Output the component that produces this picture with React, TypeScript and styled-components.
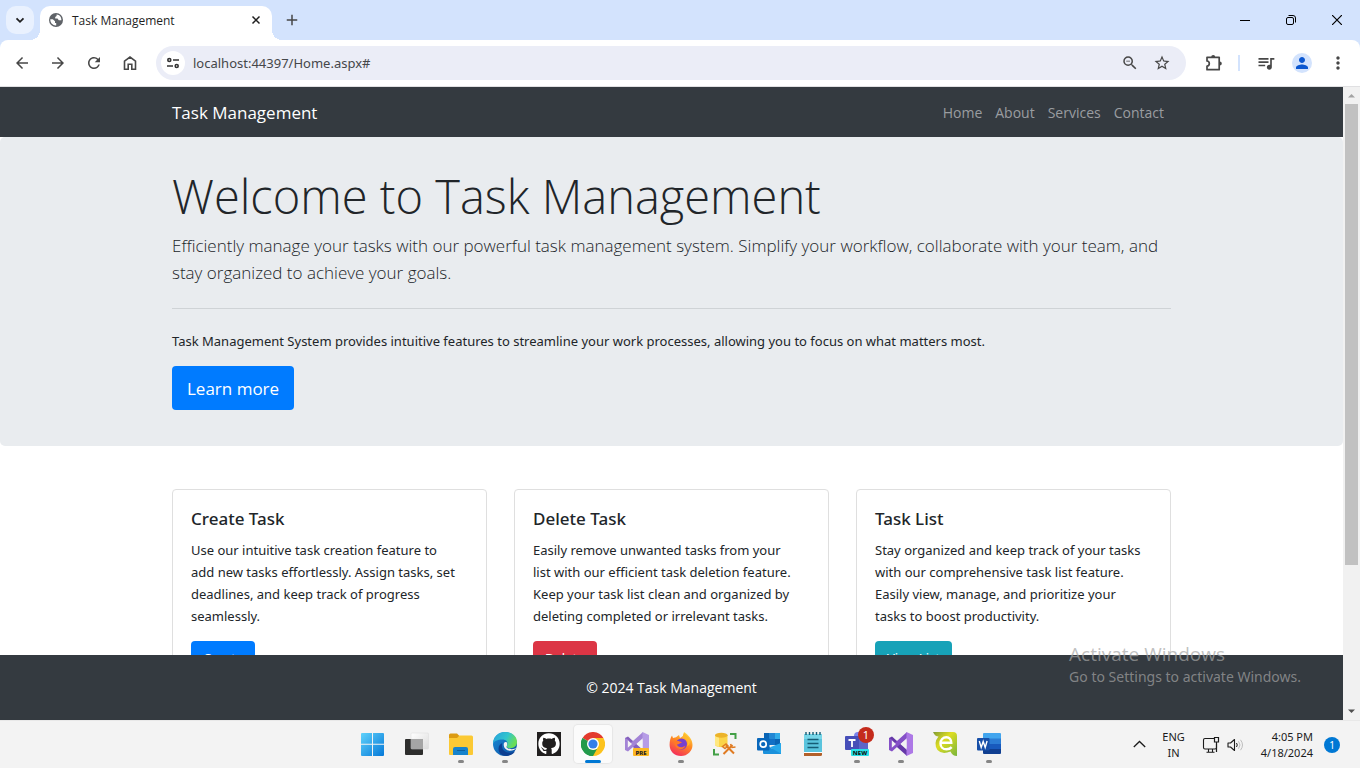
import React from "react";
import styled, { createGlobalStyle } from "styled-components";
import {
  MdArrowBack,
  MdArrowForward,
  MdRefresh,
  MdZoomOut,
  MdStarBorder,
  MdQueueMusic,
  MdPerson,
  MdMoreVert,
  MdAdd,
} from "react-icons/md";
import { FaGithub } from "react-icons/fa";

const display = `"Open Sans", "Noto Sans", sans-serif`;

const GlobalStyle = createGlobalStyle`
  *, *::before, *::after { box-sizing: border-box; }
  html, body { margin: 0; padding: 0; }
  body { font-family: "Noto Sans", "Open Sans", sans-serif; font-size: 13px; color: #212529; background: #fff; }
  h1, h2, p { margin: 0; }
  button, input { font: inherit; color: inherit; }
  button { border: 0; padding: 0; background: none; cursor: pointer; }
  a { color: inherit; text-decoration: none; }
  svg { display: block; }
`;

/* ---------- window ---------- */

const Window = styled.div`
  display: flex;
  flex-direction: column;
  height: 100vh;
  overflow: hidden;
`;

const TabStrip = styled.header`
  display: flex;
  align-items: flex-end;
  flex: none;
  height: 40px;
  padding-left: 6px;
  background: #d3e3fd;
`;

const TabSearch = styled.button`
  display: grid;
  place-items: center;
  width: 28px;
  height: 28px;
  margin: 0 6px 6px 0;
  border-radius: 10px;
  background: #e9f1fe;
`;

const Tab = styled.div`
  position: relative;
  display: flex;
  align-items: center;
  width: 232px;
  height: 34px;
  padding: 0 8px 6px;
  gap: 8px;
  border-radius: 10px 10px 0 0;
  background: #fff;
  color: #1f1f1f;
  font-family: ${display};
  font-size: 12px;

  &::before,
  &::after {
    content: "";
    position: absolute;
    bottom: 0;
    width: 10px;
    height: 10px;
  }
  &::before {
    left: -10px;
    background: radial-gradient(circle at 0 0, transparent 10px, #fff 10px);
  }
  &::after {
    right: -10px;
    background: radial-gradient(circle at 100% 0, transparent 10px, #fff 10px);
  }
`;

const TabTitle = styled.span`
  flex: 1;
`;

const TabClose = styled.button`
  display: grid;
  place-items: center;
  width: 16px;
  height: 16px;
  color: #1f1f1f;
`;

const NewTab = styled.button`
  display: grid;
  place-items: center;
  width: 28px;
  height: 28px;
  margin: 0 auto 6px 6px;
  color: #474747;
`;

const CaptionButton = styled.button`
  display: grid;
  place-items: center;
  width: 46px;
  height: 40px;
`;

const Toolbar = styled.div`
  background: #d3e3fd;
  flex: none;
`;

const ToolbarRow = styled.div`
  display: flex;
  align-items: center;
  height: 47px;
  padding: 0 4px;
  border-bottom: 1px solid #e0e0e2;
  border-radius: 8px 8px 0 0;
  background: #fff;
  color: #474747;
`;

const ToolButton = styled.button`
  display: grid;
  place-items: center;
  flex: none;
  width: 36px;
  height: 34px;
`;

const Omnibox = styled.div`
  display: flex;
  align-items: center;
  flex: 1;
  min-width: 0;
  height: 34px;
  margin: 0 9px 0 8px;
  padding: 0 8px 0 5px;
  border-radius: 17px;
  background: #ebedf7;
`;

const SiteInfo = styled.button`
  display: grid;
  place-items: center;
  flex: none;
  width: 24px;
  height: 24px;
  border-radius: 12px;
  background: #fff;
`;

const Address = styled.input`
  flex: 1;
  min-width: 0;
  margin-left: 8px;
  padding: 0;
  border: 0;
  outline: 0;
  background: transparent;
  color: #45474a;
`;

const OmniButton = styled.button`
  display: grid;
  place-items: center;
  width: 32px;
  height: 32px;
`;

const Divider = styled.span`
  width: 2px;
  height: 16px;
  margin: 0 8px 0 7px;
  background: #d3e3fd;
`;

const Avatar = styled.span`
  display: grid;
  place-items: center;
  width: 20px;
  height: 20px;
  border-radius: 10px;
  background: #d3e3fd;
  color: #0b57d0;
`;

const Viewport = styled.div`
  display: flex;
  flex: 1;
  min-height: 0;
`;

/* ---------- web page ---------- */

const Page = styled.div`
  position: relative;
  display: flex;
  flex-direction: column;
  flex: 1;
  min-width: 0;
`;

const Container = styled.div`
  width: 100%;
  max-width: 1027px;
  margin: 0 auto;
  padding: 0 14px;
`;

const NavBar = styled.nav`
  flex: none;
  background: #343a40;
`;

const NavRow = styled(Container)`
  display: flex;
  align-items: center;
  justify-content: space-between;
  height: 50px;
`;

const Brand = styled.a`
  color: #fff;
  font-family: ${display};
  font-size: 17px;
`;

const NavLinks = styled.div`
  display: flex;
  gap: 13px;
  padding-right: 7px;
  color: #9a9da0;
  font-family: ${display};
  font-size: 14px;
`;

const Scroller = styled.main`
  flex: 1;
  min-height: 0;
  overflow: hidden;
`;

const Jumbotron = styled.section`
  padding: 29px 0 36px;
  border-radius: 5px;
  background: #e9ecef;
`;

const Heading = styled.h1`
  margin-bottom: 6px;
  font-family: ${display};
  font-size: 47px;
  font-weight: 300;
  line-height: 60px;
`;

const Lead = styled.p`
  font-family: ${display};
  font-size: 17px;
  font-weight: 300;
  line-height: 27px;
`;

const Rule = styled.hr`
  height: 1px;
  margin: 22px 0 21px;
  border: 0;
  background: #cfd3d6;
`;

const Text = styled.p`
  margin-bottom: 14px;
  line-height: 22px;
`;

const LearnMore = styled.button`
  height: 44px;
  padding: 0 15px;
  border-radius: 4px;
  background: #007bff;
  color: #fff;
  font-family: ${display};
  font-size: 17px;
`;

const Cards = styled(Container)`
  display: grid;
  grid-template-columns: repeat(3, 1fr);
  gap: 27px;
  margin-top: 43px;
`;

const Card = styled.article`
  padding: 18px 28px 18px 18px;
  border: 1px solid #dfdfdf;
  border-radius: 4px;
  background: #fff;
`;

const CardTitle = styled.h2`
  margin-bottom: 9px;
  font-size: 17px;
  font-weight: 500;
  line-height: 22px;
`;

const CardButton = styled.button<{ $color: string }>`
  height: 34px;
  padding: 0 12px;
  border-radius: 4px;
  background: ${(p) => p.$color};
  color: #fff;
`;

const Footer = styled.footer`
  display: grid;
  place-items: center;
  flex: none;
  height: 65px;
  background: #343a40;
  color: #fff;
  font-family: ${display};
  font-size: 14px;
`;

const Watermark = styled.div`
  position: absolute;
  right: 42px;
  bottom: 33px;
  color: rgba(165, 165, 165, 0.7);
  font-size: 14px;
  line-height: 20px;
  pointer-events: none;
`;

const WatermarkTitle = styled.div`
  font-family: ${display};
  font-size: 19px;
  line-height: 26px;
`;

const ScrollBar = styled.div`
  display: flex;
  flex-direction: column;
  align-items: center;
  flex: none;
  width: 17px;
  background: #f1f1f1;
`;

const ScrollButton = styled.button`
  display: grid;
  place-items: center;
  width: 17px;
  height: 17px;
`;

const ScrollTrack = styled.div`
  flex: 1;
`;

const ScrollThumb = styled.div`
  width: 13px;
  height: 77%;
  background: #c1c1c1;
`;

/* ---------- taskbar ---------- */

const TaskBar = styled.footer`
  display: grid;
  grid-template-columns: 1fr auto 1fr;
  flex: none;
  height: 48px;
  padding-left: 2px;
  border-top: 1px solid #e8e8e8;
  background: #f3f3f3;
  color: #1b1b1b;
  font-size: 11px;
`;

const Apps = styled.div`
  display: flex;
  grid-column: 2;
`;

const AppSlot = styled.button<{ $state?: "open" | "active" }>`
  position: relative;
  display: grid;
  place-items: center;
  width: 38px;
  height: 38px;
  margin: 4px 3px;
  border-radius: 4px;
  background: ${(p) => (p.$state === "active" ? "#fbfbfb" : "transparent")};
  box-shadow: ${(p) => (p.$state === "active" ? "0 0 1px 1px #e6e6e6" : "none")};

  &::after {
    content: "";
    position: absolute;
    bottom: 0;
    display: ${(p) => (p.$state ? "block" : "none")};
    width: ${(p) => (p.$state === "active" ? 16 : 6)}px;
    height: 3px;
    border-radius: 2px;
    background: ${(p) => (p.$state === "active" ? "#0078d4" : "#868686")};
  }
`;

const AppBadge = styled.span`
  position: absolute;
  top: 2px;
  right: 2px;
  width: 16px;
  height: 16px;
  border-radius: 8px;
  background: #c42b1c;
  color: #fff;
  font-size: 11px;
  line-height: 16px;
  text-align: center;
`;

const Tray = styled.div`
  display: flex;
  align-items: center;
  justify-content: flex-end;
  padding-right: 20px;
`;

const TrayButton = styled.button<{ $gap?: number }>`
  margin-right: ${(p) => p.$gap ?? 0}px;
  text-align: right;
  line-height: 16px;
`;

const Language = styled(TrayButton)`
  text-align: center;
`;

const Notice = styled.button`
  width: 16px;
  height: 16px;
  border-radius: 8px;
  background: #0078d4;
  color: #fff;
  font-size: 10px;
  line-height: 16px;
`;

/* ---------- icons ---------- */

const Svg = ({ size = 24, box = 24, children }: { size?: number; box?: number; children: React.ReactNode }) => (
  <svg width={size} height={size} viewBox={`0 0 ${box} ${box}`} fill="none" aria-hidden="true">
    {children}
  </svg>
);

const GlobeIcon = () => (
  <Svg size={16} box={16}>
    <circle cx="8" cy="8" r="7" fill="#5f6368" />
    <path d="M2.300 7.300h2.500l2.200 2v1.700h1.200v2.400C4.800 13.600 2.200 11 2.300 7.300z" fill="#fff" />
    <path d="M8.600 2.600v1.500L7.200 5v1.500h2.300l1.300 1.700h2.600c.1-3-1.800-5.300-4.800-5.600z" fill="#fff" />
  </Svg>
);

const HomeIcon = () => (
  <Svg size={16} box={16}>
    <path d="M2.500 6.200 8 2l5.500 4.200V14.200H9.800V9.200H6.200v5H2.500z" stroke="currentColor" strokeWidth="1.600" />
  </Svg>
);

const TuneIcon = () => (
  <Svg size={16} box={16}>
    <g stroke="#333" strokeWidth="1.600">
      <circle cx="4.300" cy="5" r="1.500" />
      <path d="M8 5h6M2 11h6" />
      <circle cx="11.700" cy="11" r="1.500" />
    </g>
  </Svg>
);

const PuzzleIcon = () => (
  <Svg size={18} box={18}>
    <path
      d="M3 3.300h12.200v12.400H3v-3.500c1.500 0 2.300-1 2.300-2.600S4.500 7 3 7z"
      stroke="currentColor"
      strokeWidth="1.700"
      strokeLinejoin="round"
    />
    <path d="M7.200 3a2 2 0 0 1 4 0zM15.800 7.500a2 2 0 0 1 0 4z" fill="currentColor" />
  </Svg>
);

const WindowsIcon = () => (
  <Svg>
    <defs>
      <linearGradient id="win" x1="0" y1="0" x2="1" y2="1">
        <stop stopColor="#5fd2fb" />
        <stop offset="1" stopColor="#0578d8" />
      </linearGradient>
    </defs>
    <path d="M1 1H11v10.800H0V2Q0 1 1 1zM12 1h10q1 0 1 1v9.800H12zM0 12.800H11V24H1q-1 0-1-1zM12 12.800h11V23q0 1-1 1H12z" fill="url(#win)" />
  </Svg>
);

const TaskViewIcon = () => (
  <Svg>
    <defs>
      <linearGradient id="pane" x1="0" y1="0" x2="1" y2="1">
        <stop stopColor="#fff" />
        <stop offset="1" stopColor="#dcdcdc" />
      </linearGradient>
    </defs>
    <rect x="0" y="7" width="18" height="16" rx="1" fill="#2d2d2c" />
    <rect x="6" y="1" width="17.500" height="16" rx="1" fill="url(#pane)" stroke="#dadada" strokeWidth=".5" />
    <path d="M6 7h12v10H6z" fill="#a5a5a5" />
  </Svg>
);

const FolderIcon = () => (
  <Svg>
    <path d="M0 3q0-1.500 1.500-1.500H8l2.500 2.500V9H0z" fill="#dc9b12" />
    <path d="M0 6h8l2.500-2.500h12q1.500 0 1.500 1.500v17q0 1-1 1H1q-1 0-1-1z" fill="#fbc934" />
    <path d="M4 23v-6q0-2 2-2h11q2 0 2 2v6z" fill="#1683cc" />
    <path d="M8 18.500h8" stroke="#0e609e" />
  </Svg>
);

const EdgeIcon = () => (
  <Svg>
    <defs>
      <linearGradient id="edgeTop" x1="0" y1="0" x2="1" y2=".4">
        <stop stopColor="#279fdd" />
        <stop offset=".6" stopColor="#31c5cd" />
        <stop offset="1" stopColor="#69dd58" />
      </linearGradient>
      <linearGradient id="edgeLow" x1="0" y1="0" x2="1" y2="1">
        <stop stopColor="#1b8ed8" />
        <stop offset="1" stopColor="#0b4ca0" />
      </linearGradient>
    </defs>
    <circle cx="12" cy="12" r="12" fill="url(#edgeLow)" />
    <path d="M0 12C0 4.500 5.500 0 12 0c7 0 12 4.500 12 10 0 4-3 6.200-6.500 6.200-3 0-4.300-1.200-3.500-2.500 1.200-2 .6-6.200-4.700-6.200C4.500 7.500.8 9 0 12z" fill="url(#edgeTop)" />
    <path d="M9.300 11c-1.700 6 2.500 10.500 8.500 9.800 2-.3 3.200-1 4.200-1.300-3.500 5-10 5.500-13.500 3C4 19.500 5 12.500 9.300 11z" fill="#0d3f91" />
    <path d="M23.500 15.500c-2 2-6.500 2.200-9.300.4-1.700-1.100.3-2 0-4.500-.5-1.900-2.500-1.500-3.200-.3-1.200 3.500 1.500 7.500 6 7.700 3 0 5.300-1.200 6.500-3.300z" fill="#f3f3f3" />
  </Svg>
);

const GithubTile = styled.span`
  display: grid;
  place-items: center;
  width: 24px;
  height: 24px;
  background: #211f1f;
  color: #fff;
`;

const ChromeIcon = () => (
  <Svg>
    <path d="M12 12 1.600 6A12 12 0 0 1 22.400 6z" fill="#e33b2e" />
    <path d="M12 12 22.400 6A12 12 0 0 1 12 24z" fill="#fcc31e" />
    <path d="M12 12v12A12 12 0 0 1 1.600 6z" fill="#229a4b" />
    <path d="M12 6h10.400L17.200 15 12 24l4-12z" fill="#fcc31e" />
    <path d="M1.600 6 6.800 15 12 18l4-1-4 7A12 12 0 0 1 1.600 6z" fill="#229a4b" />
    <circle cx="12" cy="12" r="6" fill="#fff" />
    <circle cx="12" cy="12" r="4.600" fill="#347ee9" />
  </Svg>
);

const VisualStudioIcon = ({ pre }: { pre?: boolean }) => (
  <Svg>
    <path d="m0 6 3-1.500L18 18v6L0 8z" fill={pre ? "#8460bd" : "#6538a8"} />
    <path d="M0 6v12l3 1.500L18 6V0L3.500 13V8z" fill={pre ? "#a384d6" : "#8550c7"} />
    <path d="m17.500 0 6.500 3v18l-6.500 3z" fill={pre ? "#b69ce6" : "#ad78e6"} />
    <path d="M2.800 8.200 7 12l-4.200 3.800z" fill="#f3f3f3" />
    <path d="M17.500 7.500v9L12 12z" fill="#f3f3f3" />
    {pre && (
      <>
        <rect x="8" y="16" width="16" height="8" rx="1" fill="#fcb823" />
        <text x="16" y="22.500" fontSize="6" fontWeight="800" textAnchor="middle" fill="#222">PRE</text>
      </>
    )}
  </Svg>
);

const FirefoxIcon = () => (
  <Svg>
    <defs>
      <linearGradient id="fox" x1=".8" y1="0" x2=".3" y2="1">
        <stop stopColor="#ffe34a" />
        <stop offset=".45" stopColor="#ff8b21" />
        <stop offset="1" stopColor="#f42c5c" />
      </linearGradient>
    </defs>
    <path d="M3 3.500 4 6l3-.8L10 3l1 3 3-2 1-4c4 2.500 8.500 7 8.500 13S18.500 24 12 24 .6 19.500.6 13C.6 9 1.500 5.500 3 3.500z" fill="url(#fox)" />
    <circle cx="12.500" cy="12" r="5.500" fill="#7540cf" />
    <path d="M5 10c2-1.500 5-1.500 8 .5-2 .3-2.500 2-5 2 1 3.500 6 3.500 8.500 1-1 5-10 6-11.500-3.500z" fill="#ff7926" />
    <path d="M13.500 5c4 1 6.500 5 4.500 9.500 4-2 3.500-7 1-9.500L15 1z" fill="#ffb82a" />
  </Svg>
);

const DatabaseToolsIcon = () => (
  <Svg>
    <path d="M17 2h5.500v5M1 17v5.500h5" stroke="#43a047" strokeWidth="2" />
    <path d="M2 3.500v9C2 16 14.500 16 14.500 12.500v-9z" fill="#fbd44a" />
    <path d="M2 3.500v9q1.500 2 4 2.500V5z" fill="#ffe880" />
    <ellipse cx="8.300" cy="3.200" rx="6.300" ry="2.500" fill="#ecb32a" />
    <path d="m10.500 22 9-9M21 21.500l-8-8" stroke="#e07b22" strokeWidth="2" />
    <path d="m9.500 14.500 3.500-2.500 2 2-3 2.500zM17.500 12l1.500 3.500 3.500-.5" stroke="#e07b22" strokeWidth="1.500" />
  </Svg>
);

const OutlookIcon = () => (
  <Svg>
    <path d="M7 1h16v12H7z" fill="#0a64b4" />
    <path d="M12 1h6v6h-6z" fill="#2287d4" />
    <path d="M18 1h5v6h-5z" fill="#32ace8" />
    <path d="M12 7h6v6h-6z" fill="#1170c5" />
    <path d="M6 11l9 5.500 9-5.500v11H7q-1 0-1-1z" fill="#1b91dc" />
    <path d="m13 15.300 11 6.500V11z" fill="#27a8ea" />
    <rect y="6" width="12.500" height="12.500" rx="1" fill="#0867bb" />
    <circle cx="6.200" cy="12.200" r="3" stroke="#fff" strokeWidth="1.700" />
  </Svg>
);

const NotepadIcon = () => (
  <Svg>
    <path d="M3 2h18v19H3z" fill="#5ac4dd" />
    <path d="M3 2h18v5H3z" fill="#78d6e8" />
    <path d="M3 21h18v1.500q0 1.500-1.500 1.500H3z" fill="#b2602a" />
    <path d="M3 20.500h18" stroke="#fff" />
    <path d="M5 0v3M8.500 0v3M12 0v3M15.500 0v3M19 0v3M6.500 7.500h11M6.500 11.500h11M6.500 15.500h11" stroke="#155c75" strokeWidth="1.400" />
  </Svg>
);

const TeamsIcon = () => (
  <Svg>
    <circle cx="13" cy="4" r="4" fill="#7b83eb" />
    <path d="M8 7h15v10q0 5-6 5T8 18z" fill="#5d65c9" />
    <rect y="4" width="14" height="14" rx="1" fill="#464eb8" />
    <path d="M3.500 8h7M7 8v7" stroke="#fff" strokeWidth="1.800" />
    <rect x="6" y="17" width="18" height="7" rx="1" fill="#29e1e8" />
    <text x="15" y="22.700" fontSize="6" fontWeight="800" textAnchor="middle" fill="#111">NEW</text>
  </Svg>
);

const EditorIcon = () => (
  <Svg>
    <defs>
      <linearGradient id="lime" x1="0" y1="0" x2="1" y2="1">
        <stop stopColor="#7f9a34" />
        <stop offset=".4" stopColor="#dedd22" />
        <stop offset="1" stopColor="#79b53c" />
      </linearGradient>
    </defs>
    <path d="M0 0h20q4 0 4 4v20q-4.500 0-6.500-4.500Q9 23 4.500 18 0 11 5.500 4.500 2 4.500 0 0z" fill="url(#lime)" />
    <path d="M7.500 10.800h10.800c0-3.500-2-5.600-4.900-5.600-3.500 0-5.900 2.700-5.900 6.200 0 3.600 2.400 5.900 6 5.900 2.500 0 4-.8 5.200-2.200" stroke="#fff" strokeWidth="2.400" />
  </Svg>
);

const WordIcon = () => (
  <Svg>
    <path d="M6 2q0-1 1-1h16q1 0 1 1v5H6z" fill="#42a5ee" />
    <path d="M6 6.500h18V12H6z" fill="#2b7cd4" />
    <path d="M6 12h18v5.500H6z" fill="#185abd" />
    <path d="M6 17h18v4q0 1-1 1H7q-1 0-1-1z" fill="#103f91" />
    <rect y="6" width="12.500" height="12.500" rx="1" fill="#174fa8" />
    <path d="m2.300 9 1.900 6.500 2-6 2 6L10.100 9" stroke="#fff" strokeWidth="1.400" />
  </Svg>
);

/* ---------- data ---------- */

const cards = [
  {
    title: "Create Task",
    text: "Use our intuitive task creation feature to add new tasks effortlessly. Assign tasks, set deadlines, and keep track of progress seamlessly.",
    action: "Create",
    color: "#007bff",
  },
  {
    title: "Delete Task",
    text: "Easily remove unwanted tasks from your list with our efficient task deletion feature. Keep your task list clean and organized by deleting completed or irrelevant tasks.",
    action: "Delete",
    color: "#dc3545",
  },
  {
    title: "Task List",
    text: "Stay organized and keep track of your tasks with our comprehensive task list feature. Easily view, manage, and prioritize your tasks to boost productivity.",
    action: "View List",
    color: "#17a2b8",
  },
];

const apps: { name: string; icon: React.ReactNode; state?: "open" | "active"; badge?: string }[] = [
  { name: "Start", icon: <WindowsIcon /> },
  { name: "Task View", icon: <TaskViewIcon /> },
  { name: "File Explorer", icon: <FolderIcon />, state: "open" },
  { name: "Edge", icon: <EdgeIcon />, state: "open" },
  { name: "GitHub", icon: <GithubTile><FaGithub size={22} /></GithubTile> },
  { name: "Chrome", icon: <ChromeIcon />, state: "active" },
  { name: "Visual Studio Preview", icon: <VisualStudioIcon pre /> },
  { name: "Firefox", icon: <FirefoxIcon />, state: "open" },
  { name: "SQL Server Management Studio", icon: <DatabaseToolsIcon /> },
  { name: "Outlook", icon: <OutlookIcon /> },
  { name: "Notepad", icon: <NotepadIcon /> },
  { name: "Teams", icon: <TeamsIcon />, state: "open", badge: "1" },
  { name: "Visual Studio", icon: <VisualStudioIcon />, state: "open" },
  { name: "Editor", icon: <EditorIcon /> },
  { name: "Word", icon: <WordIcon />, state: "open" },
];

export default function App() {
  return (
    <Window>
      <GlobalStyle />
      <TabStrip>
        <TabSearch aria-label="Search tabs">
          <Svg size={10} box={10}>
            <path d="m1.500 3.300 3.500 3.500 3.500-3.500" stroke="#1f1f1f" strokeWidth="1.800" />
          </Svg>
        </TabSearch>
        <Tab>
          <GlobeIcon />
          <TabTitle>Task Management</TabTitle>
          <TabClose aria-label="Close tab">
            <Svg size={10} box={10}><path d="m1.500 1.500 7 7m0-7-7 7" stroke="currentColor" strokeWidth="1.500" /></Svg>
          </TabClose>
        </Tab>
        <NewTab aria-label="New tab"><MdAdd size={18} /></NewTab>
        <CaptionButton aria-label="Minimize">
          <Svg size={10} box={10}><path d="M0 5.500h10" stroke="#000" /></Svg>
        </CaptionButton>
        <CaptionButton aria-label="Restore">
          <Svg size={10} box={10}>
            <rect x=".5" y="2.500" width="7" height="7" rx="1.500" stroke="#000" />
            <path d="M2.500.5H7q2.500 0 2.500 2.500v4.500" stroke="#000" />
          </Svg>
        </CaptionButton>
        <CaptionButton aria-label="Close">
          <Svg size={10} box={10}><path d="m0 0 10 10m0-10-10 10" stroke="#000" strokeWidth="1.200" /></Svg>
        </CaptionButton>
      </TabStrip>

      <Toolbar>
        <ToolbarRow>
          <ToolButton aria-label="Back"><MdArrowBack size={18} /></ToolButton>
          <ToolButton aria-label="Forward"><MdArrowForward size={18} /></ToolButton>
          <ToolButton aria-label="Reload"><MdRefresh size={18} /></ToolButton>
          <ToolButton aria-label="Home"><HomeIcon /></ToolButton>
          <Omnibox>
            <SiteInfo aria-label="Site information"><TuneIcon /></SiteInfo>
            <Address aria-label="Address" defaultValue="localhost:44397/Home.aspx#" />
            <OmniButton aria-label="Zoom"><MdZoomOut size={18} /></OmniButton>
            <OmniButton aria-label="Bookmark"><MdStarBorder size={18} /></OmniButton>
          </Omnibox>
          <ToolButton aria-label="Extensions"><PuzzleIcon /></ToolButton>
          <Divider />
          <ToolButton aria-label="Media controls"><MdQueueMusic size={20} /></ToolButton>
          <ToolButton aria-label="Profile"><Avatar><MdPerson size={18} /></Avatar></ToolButton>
          <ToolButton aria-label="Menu"><MdMoreVert size={20} /></ToolButton>
        </ToolbarRow>
      </Toolbar>

      <Viewport>
        <Page>
          <NavBar>
            <NavRow>
              <Brand href="#">Task Management</Brand>
              <NavLinks>
                <a href="#">Home</a>
                <a href="#">About</a>
                <a href="#">Services</a>
                <a href="#">Contact</a>
              </NavLinks>
            </NavRow>
          </NavBar>
          <Scroller>
            <Jumbotron>
              <Container>
                <Heading>Welcome to Task Management</Heading>
                <Lead>
                  Efficiently manage your tasks with our powerful task management system. Simplify your workflow,
                  collaborate with your team, and stay organized to achieve your goals.
                </Lead>
                <Rule />
                <Text>
                  Task Management System provides intuitive features to streamline your work processes, allowing you to
                  focus on what matters most.
                </Text>
                <LearnMore>Learn more</LearnMore>
              </Container>
            </Jumbotron>
            <Cards>
              {cards.map((card) => (
                <Card key={card.title}>
                  <CardTitle>{card.title}</CardTitle>
                  <Text>{card.text}</Text>
                  <CardButton $color={card.color}>{card.action}</CardButton>
                </Card>
              ))}
            </Cards>
          </Scroller>
          <Footer>© 2024 Task Management</Footer>
          <Watermark>
            <WatermarkTitle>Activate Windows</WatermarkTitle>
            Go to Settings to activate Windows.
          </Watermark>
        </Page>
        <ScrollBar>
          <ScrollButton aria-label="Scroll up">
            <Svg size={7} box={7}><path d="M0 5.500 3.500 2 7 5.500z" fill="#a3a3a3" /></Svg>
          </ScrollButton>
          <ScrollTrack><ScrollThumb /></ScrollTrack>
          <ScrollButton aria-label="Scroll down">
            <Svg size={7} box={7}><path d="M0 1.500 3.500 5 7 1.500z" fill="#505050" /></Svg>
          </ScrollButton>
        </ScrollBar>
      </Viewport>

      <TaskBar>
        <Apps>
          {apps.map((app) => (
            <AppSlot key={app.name} aria-label={app.name} $state={app.state}>
              {app.icon}
              {app.badge && <AppBadge>{app.badge}</AppBadge>}
            </AppSlot>
          ))}
        </Apps>
        <Tray>
          <TrayButton aria-label="Show hidden icons" $gap={16}>
            <Svg size={13} box={13}><path d="m.8 9 5.700-5.500L12.200 9" stroke="#1b1b1b" strokeWidth="1.300" /></Svg>
          </TrayButton>
          <Language $gap={17}>ENG<br />IN</Language>
          <TrayButton aria-label="Network" $gap={7}>
            <Svg size={18} box={18}>
              <path d="M12 2.500H3q-1.500 0-1.500 1.500v7.500q0 1.500 1.500 1.500h10q1.500 0 1.500-1.500V8M6.500 13v3M10.500 13v3M4.500 16.200h8" stroke="#1b1b1b" strokeWidth="1.100" />
              <path d="M12.500 1.500h4v4.500h-4zM14.500 6v10" stroke="#1b1b1b" strokeWidth="1.200" />
            </Svg>
          </TrayButton>
          <TrayButton aria-label="Volume" $gap={18}>
            <Svg size={16} box={16}>
              <path d="M1 6h2.500l4-3.500v11l-4-3.500H1z" stroke="#1b1b1b" strokeWidth="1.100" strokeLinejoin="round" />
              <path d="M9.500 6q1.500 2 0 4" stroke="#1b1b1b" />
              <path d="M11.500 4.300q3 3.700 0 7.400M13.500 2.800q4 5.200 0 10.400" stroke="#bdbdbd" />
            </Svg>
          </TrayButton>
          <TrayButton $gap={11}>4:05 PM<br />4/18/2024</TrayButton>
          <Notice aria-label="1 notification">1</Notice>
        </Tray>
      </TaskBar>
    </Window>
  );
}
